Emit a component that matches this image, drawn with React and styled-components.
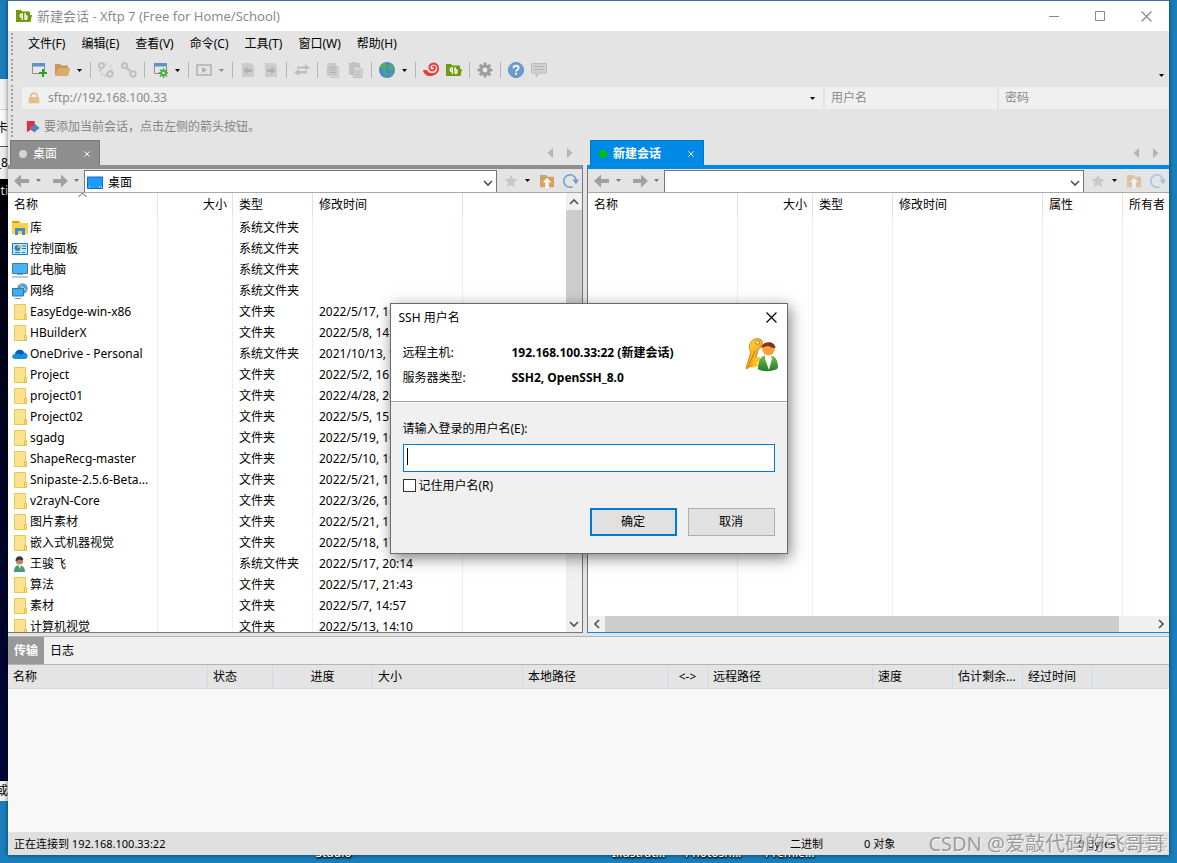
import React from "react";
import styled, { createGlobalStyle, css } from "styled-components";

const GlobalStyle = createGlobalStyle`
  * {
    box-sizing: border-box;
  }

  body {
    margin: 0;
    font-family: "Noto Sans", "Noto Sans CJK SC", sans-serif;
    font-size: 12px;
    line-height: 16px;
    color: #000;
  }

  button,
  input,
  select {
    font: inherit;
    color: inherit;
    margin: 0;
    padding: 0;
    border: none;
    background: none;
    border-radius: 0;
  }

  svg {
    display: block;
    flex: none;
  }
`;

/* ---------- desktop ---------- */

const Desktop = styled.div`
  display: grid;
  grid-template-columns: 8px minmax(0, 1fr) 8px;
  grid-template-rows: minmax(0, 1fr) 8px;
  height: 100vh;
  min-height: 700px;
  overflow: hidden;
  background: #1a7fbc;
`;

const Behind = styled.div`
  display: flex;
  flex-direction: column;
  align-items: stretch;
  padding-top: 79px;
  padding-bottom: 54px;
  overflow: hidden;
`;

const BehindPart = styled.div`
  display: flex;
  align-items: center;
  justify-content: flex-end;
  flex: ${({ $grow, $height }) => ($grow ? "1 1 0" : `0 0 ${$height}px`)};
  background: ${({ $bg }) => $bg};
  color: ${({ $color }) => $color || "#000"};
  border-bottom: 1px solid ${({ $line }) => $line || "transparent"};
  white-space: nowrap;
  overflow: hidden;
`;

const DesktopLabels = styled.div`
  position: relative;
  grid-column: 1 / -1;
  overflow: hidden;
`;

const DesktopLabel = styled.span`
  position: absolute;
  bottom: 2px;
  left: ${({ $left }) => $left}%;
  color: #fff;
  text-shadow: 0 1px 2px #000, 1px 1px 2px #000;
`;

const Window = styled.main`
  position: relative;
  display: flex;
  flex-direction: column;
  min-height: 0;
  background: #e4e4e4;
  border-top: 1px solid #3a6e94;
  box-shadow: 0 0 5px rgba(0, 0, 0, 0.55);
`;

/* ---------- title bar ---------- */

const TitleBar = styled.header`
  display: flex;
  align-items: center;
  flex: 0 0 30px;
  padding-left: 8px;
  gap: 5px;
  background: #fff;
  color: #8c8c8c;
`;

const TitleText = styled.h1`
  flex: 1;
  margin: 0;
  font-size: 13px;
  font-weight: 400;
`;

const WindowButtons = styled.div`
  display: flex;
`;

const WindowButton = styled.button`
  display: grid;
  place-items: center;
  width: 46px;
  height: 30px;
`;

/* ---------- menu, toolbar, address ---------- */

const Band = styled.div`
  display: flex;
  align-items: center;
  flex: 0 0 ${({ $height }) => $height}px;
`;

const Grip = styled.span`
  align-self: stretch;
  flex: 0 0 3px;
  margin: 2px 0 2px 3px;
  background-image: radial-gradient(circle at 1px 1px, #a0a0a0 1px, transparent 1px);
  background-size: 3px 4px;
`;

const MenuList = styled.nav`
  display: flex;
  gap: 16px;
  padding-left: 14px;
`;

const MenuItem = styled.button`
  white-space: nowrap;
`;

const Tools = styled.div`
  display: flex;
  align-items: center;
  flex: 1;
  padding-left: 13px;
`;

const ToolButton = styled.button`
  padding: 0 3px 0 4px;
  height: 22px;
`;

const DropButton = styled.button`
  display: grid;
  place-items: center;
  width: ${({ $width }) => $width || 13}px;
  height: 22px;
`;

const ToolLine = styled.span`
  width: 1px;
  height: 16px;
  margin: 0 3px 0 4px;
  background: #b4b4b4;
`;

const Overflow = styled.span`
  align-self: flex-end;
  padding: 0 5px 6px 0;
`;

const AddressFields = styled.div`
  display: grid;
  grid-template-columns: minmax(0, 801fr) minmax(0, 172fr) minmax(0, 169fr);
  flex: 1;
  gap: 2px;
  min-width: 0;
  padding: 0 1px 0 8px;
`;

const Field = styled.label`
  display: flex;
  align-items: center;
  height: 22px;
  padding: 0 8px 0 6px;
  gap: 8px;
  background: #f0f0f0;
`;

const FieldInput = styled.input`
  flex: 1;
  min-width: 0;
  outline: none;
  color: #8a8a8a;

  &::placeholder {
    color: #8a8a8a;
    opacity: 1;
  }
`;

const Hint = styled.p`
  display: flex;
  align-items: center;
  gap: 4px;
  margin: 0;
  padding-left: 12px;
  color: #858585;
`;

/* ---------- panes ---------- */

const Panes = styled.div`
  display: grid;
  grid-template-columns: minmax(0, 575fr) minmax(0, 582fr);
  gap: 4px;
  flex: 1 1 0;
  min-height: 0;
`;

const PaneColumn = styled.section`
  display: flex;
  flex-direction: column;
  min-width: 0;
  min-height: 0;
`;

const TabStrip = styled.div`
  display: flex;
  align-items: stretch;
  flex: 0 0 25px;
  padding-left: ${({ $active }) => ($active ? 3 : 2)}px;
`;

const SessionTab = styled.div`
  display: flex;
  align-items: center;
  width: ${({ $active }) => ($active ? 114 : 90)}px;
  padding: 2px 9px 0 8px;
  gap: 6px;
  color: #fff;
  font-weight: ${({ $active }) => ($active ? 700 : 400)};
  background: ${({ $active }) => ($active ? "#008ae6" : "#8e8e8e")};
  border: 1px solid ${({ $active }) => ($active ? "#0077c8" : "#787878")};
  border-bottom: none;
`;

const Dot = styled.span`
  width: 8px;
  height: 8px;
  border-radius: 50%;
  background: ${({ $color }) => $color};
`;

const TabName = styled.span`
  flex: 1;
`;

const TabArrows = styled.div`
  display: flex;
  align-items: center;
  gap: 14px;
  margin-left: auto;
  padding-right: 10px;
`;

const Pane = styled.div`
  display: flex;
  flex-direction: column;
  flex: 1;
  min-height: 0;
  border-top: 4px solid #8e8e8e;
  border-right: 1px solid #777;
  border-bottom: 1px solid #777;

  ${({ $active }) =>
    $active &&
    css`
      border-top-color: #008ae6;
      border-bottom-color: #008ae6;
      border-right: none;
      border-left: 1px solid #777;
    `}
`;

const NavBar = styled.div`
  display: flex;
  align-items: center;
  flex: 0 0 24px;
  border-bottom: 1px solid #a8a8a8;
`;

const NavGroup = styled.div`
  display: flex;
  align-items: center;
  padding: 0 ${({ $end }) => ($end ? 3 : 0)}px 0 ${({ $end }) => ($end ? 7 : 6)}px;
`;

const NavButton = styled.button`
  opacity: ${({ disabled }) => (disabled ? 0.5 : 1)};
  margin-left: ${({ $lead }) => $lead || 0}px;
`;

const PathBox = styled.label`
  display: flex;
  align-items: center;
  flex: 1;
  min-width: 0;
  height: 22px;
  margin-top: 1px;
  padding: 3px 3px 0 2px;
  gap: 5px;
  background: #fff;
  border: 1px solid #777;
  border-bottom: none;
`;

const PathSelect = styled.select`
  flex: 1;
  min-width: 0;
  appearance: none;
  outline: none;
`;

const PaneBody = styled.div`
  display: flex;
  flex-direction: ${({ $column }) => ($column ? "column" : "row")};
  flex: 1;
  min-height: 0;
  background: #fff;
`;

const TableArea = styled.div`
  flex: 1;
  min-width: 0;
  min-height: 0;
  overflow: hidden;
`;

const FileTable = styled.table`
  width: 100%;
  height: ${({ $fill }) => ($fill ? "100%" : "auto")};
  table-layout: fixed;
  border-collapse: separate;
  border-spacing: 0;
  white-space: nowrap;
`;

const FileHead = styled.th`
  position: relative;
  height: 24px;
  padding: 0 5px 0 6px;
  font-weight: 400;
  text-align: ${({ $align }) => $align || "left"};
  border-right: 1px solid ${({ $last }) => ($last ? "transparent" : "#e2e2e2")};
`;

const FileCell = styled.td`
  height: 21px;
  padding: 0 0 0 ${({ $name }) => ($name ? 4 : 6)}px;
  border-right: 1px solid ${({ $last }) => ($last ? "transparent" : "#e6f0fb")};
`;

const FileName = styled.span`
  display: flex;
  align-items: center;
  gap: 2px;
`;

const SortMark = styled.span`
  position: absolute;
  top: -1px;
  left: 0;
  right: 0;
  display: grid;
  justify-items: center;
`;

const ScrollBar = styled.div`
  display: flex;
  flex-direction: ${({ $horizontal }) => ($horizontal ? "row" : "column")};
  flex: 0 0 16px;
  background: #f0f0f0;
`;

const ScrollEnd = styled.button`
  display: grid;
  place-items: center;
  flex: 0 0 17px;
`;

const ScrollTrack = styled.div`
  display: flex;
  flex-direction: inherit;
  flex: 1;
`;

const ScrollThumb = styled.div`
  flex: 0 0 ${({ $size }) => $size}%;
  background: #cdcdcd;
`;

/* ---------- transfers ---------- */

const Transfers = styled.section`
  flex: 0 0 196px;
  margin-top: 3px;
  border-top: 1px solid #b4b4b4;
  background: #f8f8f8;
`;

const TransferTabs = styled.div`
  display: flex;
  height: 28px;
  background: #f0f0f0;
  border-bottom: 1px solid #b4b4b4;
`;

const TransferTab = styled.button`
  padding: 0 6px;
  ${({ $active }) =>
    $active &&
    css`
      color: #fff;
      font-weight: 700;
      background: #999;
    `}
`;

const TransferTable = styled.table`
  width: 100%;
  table-layout: fixed;
  border-collapse: separate;
  border-spacing: 0;
  background: #e4e4e4;
`;

const TransferHead = styled.th`
  height: 24px;
  padding: 0 5px;
  font-weight: 400;
  white-space: nowrap;
  text-align: ${({ $align }) => $align || "left"};
  border-right: 1px solid ${({ $last }) => ($last ? "transparent" : "#cfdaea")};
  border-bottom: 1px solid #cfdaea;
`;

const StatusBar = styled.footer`
  display: grid;
  grid-template-columns: minmax(0, 1fr) 74px 214px 91px;
  align-items: center;
  flex: 0 0 23px;
  padding-left: 6px;
  font-size: 11px;
  background: #e0e0e0;
`;

const Watermark = styled.span`
  position: absolute;
  right: ${({ $right }) => $right}px;
  bottom: 0;
  font-size: ${({ $size }) => $size}px;
  line-height: 22px;
  color: ${({ $color }) => $color};
  text-shadow: 1px 1px 0 rgba(255, 255, 255, 0.7);
  white-space: nowrap;
  pointer-events: none;
`;

/* ---------- dialog ---------- */

const DialogLayer = styled.div`
  position: absolute;
  inset: 0;
  display: grid;
  place-items: center;
`;

const Dialog = styled.form`
  width: 398px;
  background: #f0f0f0;
  border: 1px solid #6a6a6a;
  box-shadow: 2px 4px 14px rgba(0, 0, 0, 0.5);
`;

const DialogTop = styled.div`
  padding: 0 8px 15px;
  background: #fff;
  border-bottom: 1px solid #a0a0a0;
`;

const DialogTitle = styled.div`
  display: flex;
  align-items: center;
  justify-content: space-between;
  height: 28px;
`;

const CloseButton = styled.button`
  padding: 2px;
`;

const HostInfo = styled.div`
  display: flex;
  justify-content: space-between;
  padding: 6px 0 0 4px;
`;

const HostList = styled.dl`
  display: grid;
  grid-template-columns: 109px auto;
  row-gap: 9px;
  margin: 0;
  padding-top: 7px;
`;

const HostTerm = styled.dt`
  margin: 0;
`;

const HostValue = styled.dd`
  margin: 0;
  font-weight: 700;
`;

const DialogBody = styled.div`
  display: flex;
  flex-direction: column;
  align-items: flex-start;
  padding: 18px 12px 17px;
  border-top: 1px solid #fff;
`;

/* text cursor is painted so that it does not blink */
const UserInput = styled.input`
  width: 100%;
  height: 28px;
  margin: 7px 0 6px;
  padding: 0 4px;
  font-size: 16px;
  background: linear-gradient(#000, #000) 3px 3px / 1px 17px no-repeat #fff;
  border: 1px solid #0078d7;
  outline: none;
  caret-color: transparent;
`;

const Remember = styled.label`
  display: flex;
  align-items: center;
  gap: 3px;
`;

const CheckBox = styled.input`
  appearance: none;
  width: 13px;
  height: 13px;
  background: #fff;
  border: 1px solid #333;
`;

const DialogButtons = styled.div`
  display: flex;
  align-self: flex-end;
  gap: 11px;
  margin-top: 14px;
`;

const DialogButton = styled.button`
  width: 87px;
  height: 28px;
  background: #e1e1e1;
  border: ${({ $primary }) => ($primary ? "2px solid #0078d7" : "1px solid #adadad")};
`;

/* ---------- icons ---------- */

const Icon = ({ size = 16, children }) => (
  <svg width={size} height={size} viewBox="0 0 16 16" fill="none" aria-hidden="true">
    {children}
  </svg>
);

const Caret = ({ color = "#000" }) => (
  <svg width="5" height="3" viewBox="0 0 5 3" aria-hidden="true">
    <path d="M0 0h5L2.5 3z" fill={color} />
  </svg>
);

const Chevron = ({ turn = 0 }) => (
  <svg width="10" height="10" viewBox="0 0 10 10" aria-hidden="true">
    <path
      d="M1 3l4 4 4-4"
      fill="none"
      stroke="#505050"
      strokeWidth="1.6"
      transform={`rotate(${turn} 5 5)`}
    />
  </svg>
);

const Cross = ({ size = 6, color = "#fff" }) => (
  <svg width={size} height={size} viewBox="0 0 10 10" aria-hidden="true">
    <path d="M0.5 0.5l9 9M9.5 0.5l-9 9" stroke={color} strokeWidth={size > 8 ? 1.1 : 1.6} />
  </svg>
);

const XftpIcon = () => (
  <Icon>
    <path d="M0 2h5l1.5 1.5H14V7h2l-1.500 7H0z" fill="#6f9a12" />
    <path
      d="M6.300 5.500v6.500M6.300 5.800C3.500 6 3.500 9.500 6.300 9.700M9 5v6.500M9 7.500c2.800 0 2.800 3.800 0 4"
      stroke="#fff"
      strokeWidth="1.300"
    />
  </Icon>
);

const NewSessionIcon = () => (
  <Icon>
    <path d="M1.500 1.500h12v10h-12z" fill="#e8e8e8" stroke="#8c8c8c" />
    <path d="M1 1h13v3.500H1z" fill="#5c93c9" />
    <path d="M12 7v8M8 11h8" stroke="#22a322" strokeWidth="2" />
  </Icon>
);

const OpenFolderIcon = () => (
  <Icon>
    <path d="M1 2h5l1.500 1.500H14V6H5l-3 7H1z" fill="#c8975a" />
    <path d="M5 6h11.500L14 14H1z" fill="#dcab6c" />
  </Icon>
);

const LinkIcon = ({ broken }) => (
  <Icon>
    <circle cx="3.5" cy="3.5" r="2.5" stroke="#c0c0c0" strokeWidth="2" />
    <circle cx="12" cy="12" r="2.7" stroke="#c0c0c0" strokeWidth="2" />
    {broken ? (
      <path d="M9 1l-1 3M14 3l-3 2M15 8h-3M1 9l3-1M3 14l2-3M7 15l1-3" stroke="#c8c8c8" strokeWidth="1.5" />
    ) : (
      <path d="M5 5l5 5" stroke="#c0c0c0" strokeWidth="2.4" />
    )}
  </Icon>
);

const GearShape = ({ x = 8, y = 8, r = 5, color }) => (
  <g transform={`translate(${x} ${y})`}>
    {[0, 45, 90, 135].map((a) => (
      <path key={a} d={`M0 ${-r - 2}V${r + 2}`} stroke={color} strokeWidth={r * 0.5} transform={`rotate(${a})`} />
    ))}
    <circle r={r} fill={color} />
    <circle r={r * 0.45} fill="#e8e8e8" />
  </g>
);

const PropertiesIcon = () => (
  <Icon>
    <path d="M2.5 1.5h12v10h-12z" fill="#e8e8e8" stroke="#8c8c8c" />
    <path d="M2 1h13v3.5H2z" fill="#5c93c9" />
    <GearShape x={11.5} y={11} r={3} color="#43ad43" />
  </Icon>
);

const PlayIcon = () => (
  <Icon>
    <path d="M1 3h14v10H1z" stroke="#bdbdbd" strokeWidth="2" />
    <path d="M6 5l5 3-5 3z" fill="#b0b0b0" />
  </Icon>
);

const SheetArrowIcon = ({ flip }) => (
  <Icon>
    <path d="M2 1h9l3 3v11H2z" fill="#cbcbcb" />
    <path
      d="M3.500 8.500l4-3.500v2H12v3H7.500v2z"
      fill="#b0b0b0"
      transform={flip ? "translate(16 0) scale(-1 1)" : undefined}
    />
  </Icon>
);

const SwapIcon = () => (
  <Icon>
    <path d="M3 4.500h8V2l5 3.500-5 3V6.500H3zM13 9H5V7L0 10.500l5 3.500v-2.500h8z" fill="#bcbcbc" />
  </Icon>
);

const CopyIcon = () => (
  <Icon>
    <path d="M4 1h7v3h3v12H5v-2H2V3z" fill="#c8c8c8" />
    <path d="M4 5.500h7M4 8h7M4 10.500h7" stroke="#b4b4b4" />
    <path d="M12.500 5v9.500H5" stroke="#d6d6d6" />
  </Icon>
);

const PasteIcon = () => (
  <Icon>
    <path d="M1 1h3V0h5v1h3v12H1z" fill="#c2c2c2" />
    <path d="M5.500 4.500h5.500l3 3v8H5.500z" fill="#d4d4d4" stroke="#bababa" />
    <path d="M7 9h5M7 11h5M7 13h5" stroke="#bbb" />
  </Icon>
);

const GlobeIcon = () => (
  <Icon>
    <circle cx="8" cy="8" r="8" fill="#4b87cf" />
    <path d="M2 3l4-2 2 1-1 3 1 2-2 2-2-1-3-3zM11 2l3 2 1 3-2 2-3-1-1-3zM5 10l4 1-1 4H6zM11 11h3l-3 3z" fill="#45b45c" />
  </Icon>
);

const ShellIcon = () => (
  <Icon>
    <path
      d="M3 10c3 3.500 9 3 11.300-.5C16.500 6 14 1.500 10.500 1.500 7 1.500 5.500 5 7 7.300c1.500 2 5 1.200 5-1.100 0-1.600-1.800-2-2.500-1"
      stroke="#ee3a31"
      strokeWidth="1.900"
    />
    <path d="M0 8h4c1 3 5 4.500 10 2.500C11.500 15.500 1 15.500 0 8z" fill="#ee3a31" />
  </Icon>
);

const HelpIcon = () => (
  <Icon>
    <circle cx="8" cy="8" r="7.6" fill="#6b9bd1" stroke="#5586bd" strokeWidth=".8" />
    <path d="M5.500 6.200C5.600 2.800 10.700 3 10.600 6c0 1.700-2.500 1.800-2.500 3.600M8.100 10.800v2" stroke="#fff" strokeWidth="1.800" />
  </Icon>
);

const ChatIcon = () => (
  <Icon>
    <path d="M.5 1.500h15v9.500H8l-3 4v-4H.5z" fill="#d0d0d0" stroke="#bcbcbc" />
    <path d="M3 4.500h10M3 7.500h10" stroke="#b4b4b4" />
  </Icon>
);

const LockIcon = () => (
  <Icon size={12}>
    <path d="M4 7V4.500c0-4 8-4 8 0V7" stroke="#dfb780" strokeWidth="2" />
    <path d="M1 7h14v8H1z" fill="#e6bd85" />
  </Icon>
);

const BookmarkIcon = () => (
  <Icon size={14}>
    <path d="M1 1h9v13l-4.500-3L1 14z" fill="#e0323c" />
    <path d="M5 7h4V3.500l6.500 5.500L9 14.500V11H5z" fill="#4a86cc" />
  </Icon>
);

const TriangleIcon = ({ right }) => (
  <svg width="6" height="10" viewBox="0 0 6 10" aria-hidden="true">
    <path d={right ? "M0 0v10l5.500-5z" : "M6 0v10L.5 5z"} fill="#b4b4b4" />
  </svg>
);

const ArrowIcon = ({ flip }) => (
  <svg width="16" height="14" viewBox="0 0 16 14" aria-hidden="true">
    <path
      d="M0 7l7-6.500v4.500h8v4H7v4.500z"
      fill="#a0a0a0"
      transform={flip ? "translate(16 0) scale(-1 1)" : undefined}
    />
  </svg>
);

const StarIcon = () => (
  <Icon size={14}>
    <path d="M8 .5l2.200 5 5.300.5-4 3.600 1.200 5.400L8 12.200 3.300 15l1.200-5.400-4-3.600 5.300-.5z" fill="#c8c8c8" />
  </Icon>
);

const UpFolderIcon = () => (
  <Icon size={14}>
    <path d="M0 1h7l1.500 2H16v12H0z" fill="#d5a264" />
    <path d="M8 4.500l5 5h-3V16H6V9.500H3z" fill="#fff" />
  </Icon>
);

const RefreshIcon = () => (
  <Icon>
    <path d="M9.500 13.700A6.200 6.200 0 1 1 13.200 8" stroke="#6a9fd4" strokeWidth="1.500" />
    <path d="M9.500 6.500h6.500l-3 5z" fill="#6a9fd4" />
  </Icon>
);

const DesktopIcon = () => (
  <Icon>
    <path d="M.5 2h15v11.500H.5z" fill="#1e9bff" stroke="#0a6fc0" />
    <path d="M2 12h1M12 12h1M14 12h1" stroke="#fff" />
  </Icon>
);

const FolderIcon = () => (
  <Icon>
    <path d="M2.500.5h11v15h-11z" fill="#fde38f" stroke="#ecc94e" />
    <path d="M12.500 10.500h2v5h-2z" fill="#fbe092" stroke="#e5bf3e" />
  </Icon>
);

const LibraryIcon = () => (
  <Icon>
    <path d="M0 1h7l1 2h8v11H0z" fill="#ffcf48" />
    <path d="M0 1h7l1 2H0z" fill="#e0a100" />
    <path d="M3 15V8h10v7h-3v-4H6v4z" fill="#3c8fd0" />
  </Icon>
);

const ControlPanelIcon = () => (
  <Icon>
    <path d="M.5 2.500h15v11H.5z" fill="#bfe6fb" stroke="#1f7db8" />
    <circle cx="5.500" cy="7" r="3" fill="#2486c8" />
    <path d="M5.500 7V4a3 3 0 0 1 3 3z" fill="#f2a81d" />
    <path d="M10 5h4M10 7.500h4M3 11.500h5M10 11.500h3" stroke="#1f7db8" />
  </Icon>
);

const ComputerIcon = () => (
  <Icon>
    <path d="M.5 1.500h15v10H.5z" fill="#48b2f5" stroke="#3d7fa8" />
    <path d="M5 12.500h6" stroke="#8aa3b3" />
    <path d="M0 15h16" stroke="#7d98a8" />
  </Icon>
);

const NetworkIcon = () => (
  <Icon>
    <circle cx="10.500" cy="5.500" r="5.300" fill="#5d9cc5" />
    <path d="M8 2c2 1 1 2.500 3 2.500s1 3 3.500 2.500" stroke="#bfe0ee" />
    <path d="M.5 5.500h11v7.500H.5z" fill="#3fadf2" stroke="#2a78ad" />
    <path d="M3 15.500h6" stroke="#7d98a8" />
  </Icon>
);

const CloudIcon = () => (
  <Icon>
    <path d="M3 13C-1 12.500-.5 8 3 8c.5-5 7-6 9-1.500 4 0 5 5.500 1.500 6.500z" fill="#1490df" />
    <path d="M3 8c1-5 7-6 9-1.500L9 9.500C7 7 5 7.500 3 8z" fill="#0a5bb0" />
  </Icon>
);

const PersonIcon = () => (
  <Icon>
    <path d="M2 16c0-5 2-7 5-7s6 2 6 7z" fill="#4a9a78" />
    <path d="M6 9h3l-1 4z" fill="#e6f0ea" />
    <circle cx="7.500" cy="5" r="3.600" fill="#b98462" />
    <path d="M3.500 5C3-1 11.500-1.500 11.200 4 8 4 6 3 5 5z" fill="#3c3430" />
  </Icon>
);

const KeyUserIcon = () => (
  <svg width="34" height="34" viewBox="0 0 34 34" aria-hidden="true">
    <defs>
      <linearGradient id="gold" x1="0" y1="0" x2="1" y2="1">
        <stop offset="0" stopColor="#ffe04a" />
        <stop offset="1" stopColor="#ee8a00" />
      </linearGradient>
      <linearGradient id="coat" x1="0" y1="0" x2="0" y2="1">
        <stop offset="0" stopColor="#79c157" />
        <stop offset="1" stopColor="#1f7d24" />
      </linearGradient>
    </defs>
    <path
      d="M6 4c2-4 9-4.500 11-1 1 3-1 7-4 9l-2 8 2 1-1 3-4 2-1 2-3 1-2 2-1-1 5-16C3.500 11 4 7 6 4z"
      fill="url(#gold)"
      stroke="#d07a00"
      strokeWidth=".9"
    />
    <circle cx="12.500" cy="4.500" r="1.800" fill="#fff" stroke="#c86a00" />
    <path d="M10 13L3 29" stroke="#c86a00" strokeWidth=".8" />
    <path d="M9 20l6-1 0 3-3 3 1 3-6 2z" fill="#ffc224" />
    <path d="M13 31c0-9 3-14 10-14s10 5 10 13c-4 4-16 4-20 1z" fill="url(#coat)" />
    <path d="M20 17h6l1 4-3 11-4-11z" fill="#f6fff2" />
    <circle cx="23.500" cy="11" r="6.300" fill="#f9a13c" />
    <path d="M16.500 10C16 3 30 1.500 30.500 10c-4 .500-5-1.500-7-2-2 0-5 1-7 2z" fill="#843511" />
  </svg>
);

/* ---------- data ---------- */

const menus = ["文件(F)", "编辑(E)", "查看(V)", "命令(C)", "工具(T)", "窗口(W)", "帮助(H)"];

const tools = [
  { icon: <NewSessionIcon />, label: "新建" },
  { icon: <OpenFolderIcon />, label: "打开", drop: "#000" },
  null,
  { icon: <LinkIcon broken />, label: "断开" },
  { icon: <LinkIcon />, label: "重新连接" },
  null,
  { icon: <PropertiesIcon />, label: "属性", drop: "#000" },
  null,
  { icon: <PlayIcon />, label: "执行", drop: "#888" },
  null,
  { icon: <SheetArrowIcon />, label: "下载" },
  { icon: <SheetArrowIcon flip />, label: "上传" },
  null,
  { icon: <SwapIcon />, label: "同步" },
  null,
  { icon: <CopyIcon />, label: "复制" },
  { icon: <PasteIcon />, label: "粘贴" },
  null,
  { icon: <GlobeIcon />, label: "语言", drop: "#000" },
  null,
  { icon: <ShellIcon />, label: "Xshell" },
  { icon: <XftpIcon />, label: "Xftp" },
  null,
  { icon: <Icon><GearShape r={5.5} color="#9c9c9c" /></Icon>, label: "选项" },
  null,
  { icon: <HelpIcon />, label: "帮助" },
  { icon: <ChatIcon />, label: "反馈" },
];

const files = [
  { name: "库", icon: <LibraryIcon />, type: "系统文件夹" },
  { name: "控制面板", icon: <ControlPanelIcon />, type: "系统文件夹" },
  { name: "此电脑", icon: <ComputerIcon />, type: "系统文件夹" },
  { name: "网络", icon: <NetworkIcon />, type: "系统文件夹" },
  { name: "EasyEdge-win-x86", date: "2022/5/17, 16:21" },
  { name: "HBuilderX", date: "2022/5/8, 14:32" },
  { name: "OneDrive - Personal", icon: <CloudIcon />, type: "系统文件夹", date: "2021/10/13, 9:15" },
  { name: "Project", date: "2022/5/2, 16:40" },
  { name: "project01", date: "2022/4/28, 20:11" },
  { name: "Project02", date: "2022/5/5, 15:26" },
  { name: "sgadg", date: "2022/5/19, 10:08" },
  { name: "ShapeRecg-master", date: "2022/5/10, 19:37" },
  { name: "Snipaste-2.5.6-Beta...", date: "2022/5/21, 11:02" },
  { name: "v2rayN-Core", date: "2022/3/26, 13:50" },
  { name: "图片素材", date: "2022/5/21, 15:44" },
  { name: "嵌入式机器视觉", date: "2022/5/18, 17:29" },
  { name: "王骏飞", icon: <PersonIcon />, type: "系统文件夹", date: "2022/5/17, 20:14" },
  { name: "算法", date: "2022/5/17, 21:43" },
  { name: "素材", date: "2022/5/7, 14:57" },
  { name: "计算机视觉", date: "2022/5/13, 14:10" },
];

const localColumns = [
  { title: "名称", width: 150 },
  { title: "大小", width: 75, align: "right" },
  { title: "类型", width: 80 },
  { title: "修改时间", width: 150 },
  { title: "" },
];

const remoteColumns = [
  { title: "名称", width: 150 },
  { title: "大小", width: 75, align: "right" },
  { title: "类型", width: 80 },
  { title: "修改时间", width: 150 },
  { title: "属性", width: 80 },
  { title: "所有者" },
];

const transferColumns = [
  { title: "名称", width: 200 },
  { title: "状态", width: 65 },
  { title: "进度", width: 100, align: "center" },
  { title: "大小", width: 150 },
  { title: "本地路径", width: 145 },
  { title: "<->", width: 40, align: "center" },
  { title: "远程路径", width: 165 },
  { title: "速度", width: 80 },
  { title: "估计剩余...", width: 70 },
  { title: "经过时间", width: 70 },
  { title: "" },
];

/* ---------- parts ---------- */

const Columns = ({ columns }) => (
  <colgroup>
    {columns.map((c, i) => (
      <col key={i} width={c.width} />
    ))}
  </colgroup>
);

const Files = ({ columns, rows, sorted }) => (
  <TableArea>
    <FileTable $fill={!rows}>
      <Columns columns={columns} />
      <thead>
        <tr>
          {columns.map((c, i) => (
            <FileHead key={i} $align={c.align} $last={i === columns.length - 1}>
              {c.title}
              {sorted && i === 0 && (
                <SortMark>
                  <svg width="9" height="6" viewBox="0 0 9 6" aria-hidden="true">
                    <path d="M.5 5l4-4 4 4" fill="none" stroke="#555" />
                  </svg>
                </SortMark>
              )}
            </FileHead>
          ))}
        </tr>
      </thead>
      <tbody>
        {rows ? (
          rows.map((f) => (
            <tr key={f.name}>
              <FileCell $name>
                <FileName>
                  {f.icon || <FolderIcon />}
                  {f.name}
                </FileName>
              </FileCell>
              <FileCell />
              <FileCell>{f.type || "文件夹"}</FileCell>
              <FileCell>{f.date}</FileCell>
              <FileCell $last />
            </tr>
          ))
        ) : (
          <tr>
            {columns.map((c, i) => (
              <FileCell key={i} $last={i === columns.length - 1} />
            ))}
          </tr>
        )}
      </tbody>
    </FileTable>
  </TableArea>
);

const FilePane = ({ name, active, path, pathLabel, children }) => (
  <PaneColumn>
    <TabStrip $active={active}>
      <SessionTab $active={active}>
        <Dot $color={active ? "#00c000" : "#d4d4d4"} />
        <TabName>{name}</TabName>
        <button type="button" aria-label="关闭标签">
          <Cross />
        </button>
      </SessionTab>
      <TabArrows>
        <TriangleIcon />
        <TriangleIcon right />
      </TabArrows>
    </TabStrip>
    <Pane $active={active}>
      <NavBar>
        <NavGroup>
          <NavButton type="button" aria-label="后退"><ArrowIcon /></NavButton>
          <DropButton type="button" $width={16} aria-label="后退列表"><Caret color="#777" /></DropButton>
          <NavButton type="button" $lead={6} aria-label="前进"><ArrowIcon flip /></NavButton>
          <DropButton type="button" $width={16} aria-label="前进列表"><Caret color="#777" /></DropButton>
        </NavGroup>
        <PathBox>
          {path && <DesktopIcon />}
          <PathSelect aria-label={pathLabel}>
            <option>{path}</option>
          </PathSelect>
          <Chevron />
        </PathBox>
        <NavGroup $end>
          <NavButton type="button" aria-label="书签"><StarIcon /></NavButton>
          <DropButton type="button" $width={19} aria-label="书签列表"><Caret /></DropButton>
          <NavButton type="button" $lead={3} disabled={active} aria-label="上级"><UpFolderIcon /></NavButton>
          <NavButton type="button" $lead={9} disabled={active} aria-label="刷新"><RefreshIcon /></NavButton>
        </NavGroup>
      </NavBar>
      {children}
    </Pane>
  </PaneColumn>
);

const LoginDialog = () => (
  <DialogLayer>
    <Dialog role="dialog" aria-label="SSH 用户名" onSubmit={(e) => e.preventDefault()}>
      <DialogTop>
        <DialogTitle>
          <span>SSH 用户名</span>
          <CloseButton type="button" aria-label="关闭">
            <Cross size={11} color="#000" />
          </CloseButton>
        </DialogTitle>
        <HostInfo>
          <HostList>
            <HostTerm>远程主机:</HostTerm>
            <HostValue>192.168.100.33:22 (新建会话)</HostValue>
            <HostTerm>服务器类型:</HostTerm>
            <HostValue>SSH2, OpenSSH_8.0</HostValue>
          </HostList>
          <KeyUserIcon />
        </HostInfo>
      </DialogTop>
      <DialogBody>
        <label htmlFor="user">请输入登录的用户名(E):</label>
        <UserInput id="user" type="text" />
        <Remember>
          <CheckBox type="checkbox" />
          记住用户名(R)
        </Remember>
        <DialogButtons>
          <DialogButton type="submit" $primary>确定</DialogButton>
          <DialogButton type="button">取消</DialogButton>
        </DialogButtons>
      </DialogBody>
    </Dialog>
  </DialogLayer>
);

const App = () => {
  return (
    <>
      <GlobalStyle />
      <Desktop lang="zh-CN">
        <Behind>
          <BehindPart $height={31} $bg="#f4f4f4" $line="#ccc" />
          <BehindPart $height={37} $bg="#fafafa" $line="#555">卡</BehindPart>
          <BehindPart $height={32} $bg="#f0f0f0">_8</BehindPart>
          <BehindPart $height={24} $bg="#000" $color="#ddd">ti</BehindPart>
          <BehindPart $grow $bg="linear-gradient(#000010, #00083a)" />
          <BehindPart $height={20} $bg="#f0f0f0">或</BehindPart>
        </Behind>
        <Window>
          <TitleBar>
            <XftpIcon />
            <TitleText>新建会话 - Xftp 7 (Free for Home/School)</TitleText>
            <WindowButtons>
              <WindowButton type="button" aria-label="最小化">
                <svg width="10" height="10"><path d="M0 5.500h10" stroke="#888" /></svg>
              </WindowButton>
              <WindowButton type="button" aria-label="最大化">
                <svg width="11" height="11"><path d="M.5.5h9v9h-9z" fill="none" stroke="#888" /></svg>
              </WindowButton>
              <WindowButton type="button" aria-label="关闭">
                <Cross size={11} color="#888" />
              </WindowButton>
            </WindowButtons>
          </TitleBar>

          <Band $height={26}>
            <Grip />
            <MenuList>
              {menus.map((m) => (
                <MenuItem key={m} type="button">{m}</MenuItem>
              ))}
            </MenuList>
          </Band>
          <Band $height={26}>
            <Grip />
            <Tools>
              {tools.map((t, i) =>
                t ? (
                  <React.Fragment key={i}>
                    <ToolButton type="button" aria-label={t.label}>{t.icon}</ToolButton>
                    {t.drop && (
                      <DropButton type="button" aria-label={`${t.label}列表`}>
                        <Caret color={t.drop} />
                      </DropButton>
                    )}
                  </React.Fragment>
                ) : (
                  <ToolLine key={i} />
                )
              )}
            </Tools>
            <Overflow><Caret /></Overflow>
          </Band>
          <Band $height={30}>
            <Grip />
            <AddressFields>
              <Field>
                <LockIcon />
                <FieldInput aria-label="地址" defaultValue="sftp://192.168.100.33" />
                <Caret />
              </Field>
              <Field>
                <FieldInput aria-label="用户名" placeholder="用户名" />
              </Field>
              <Field>
                <FieldInput aria-label="密码" type="password" placeholder="密码" />
              </Field>
            </AddressFields>
          </Band>
          <Band $height={27}>
            <Grip />
            <Hint>
              <BookmarkIcon />
              要添加当前会话，点击左侧的箭头按钮。
            </Hint>
          </Band>

          <Panes>
            <FilePane name="桌面" path="桌面" pathLabel="本地路径">
              <PaneBody>
                <Files columns={localColumns} rows={files} sorted />
                <ScrollBar>
                  <ScrollEnd type="button" aria-label="向上"><Chevron turn={180} /></ScrollEnd>
                  <ScrollTrack><ScrollThumb $size={60} /></ScrollTrack>
                  <ScrollEnd type="button" aria-label="向下"><Chevron /></ScrollEnd>
                </ScrollBar>
              </PaneBody>
            </FilePane>
            <FilePane name="新建会话" path="" pathLabel="远程路径" active>
              <PaneBody $column>
                <Files columns={remoteColumns} />
                <ScrollBar $horizontal>
                  <ScrollEnd type="button" aria-label="向左"><Chevron turn={90} /></ScrollEnd>
                  <ScrollTrack><ScrollThumb $size={94} /></ScrollTrack>
                  <ScrollEnd type="button" aria-label="向右"><Chevron turn={-90} /></ScrollEnd>
                </ScrollBar>
              </PaneBody>
            </FilePane>
          </Panes>

          <Transfers>
            <TransferTabs>
              <TransferTab type="button" $active>传输</TransferTab>
              <TransferTab type="button">日志</TransferTab>
            </TransferTabs>
            <TransferTable>
              <Columns columns={transferColumns} />
              <thead>
                <tr>
                  {transferColumns.map((c, i) => (
                    <TransferHead key={i} $align={c.align} $last={i === transferColumns.length - 1}>
                      {c.title}
                    </TransferHead>
                  ))}
                </tr>
              </thead>
            </TransferTable>
          </Transfers>
          <StatusBar>
            <span>正在连接到 192.168.100.33:22</span>
            <span>二进制</span>
            <span>0 对象</span>
            <span>0 Bytes</span>
          </StatusBar>
          <Watermark $right={1} $size={16} $color="rgba(120, 120, 120, 0.35)">@51CTO博客</Watermark>
          <Watermark $right={4} $size={20} $color="rgba(120, 120, 120, 0.7)">CSDN @爱敲代码的飞哥哥</Watermark>
          <LoginDialog />
        </Window>
        <DesktopLabels>
          <DesktopLabel $left={26.8}>Studio</DesktopLabel>
          <DesktopLabel $left={52}>Illustrat...</DesktopLabel>
          <DesktopLabel $left={58.2}>Photosh...</DesktopLabel>
          <DesktopLabel $left={65}>Premie...</DesktopLabel>
        </DesktopLabels>
      </Desktop>
    </>
  );
};

export default App;
